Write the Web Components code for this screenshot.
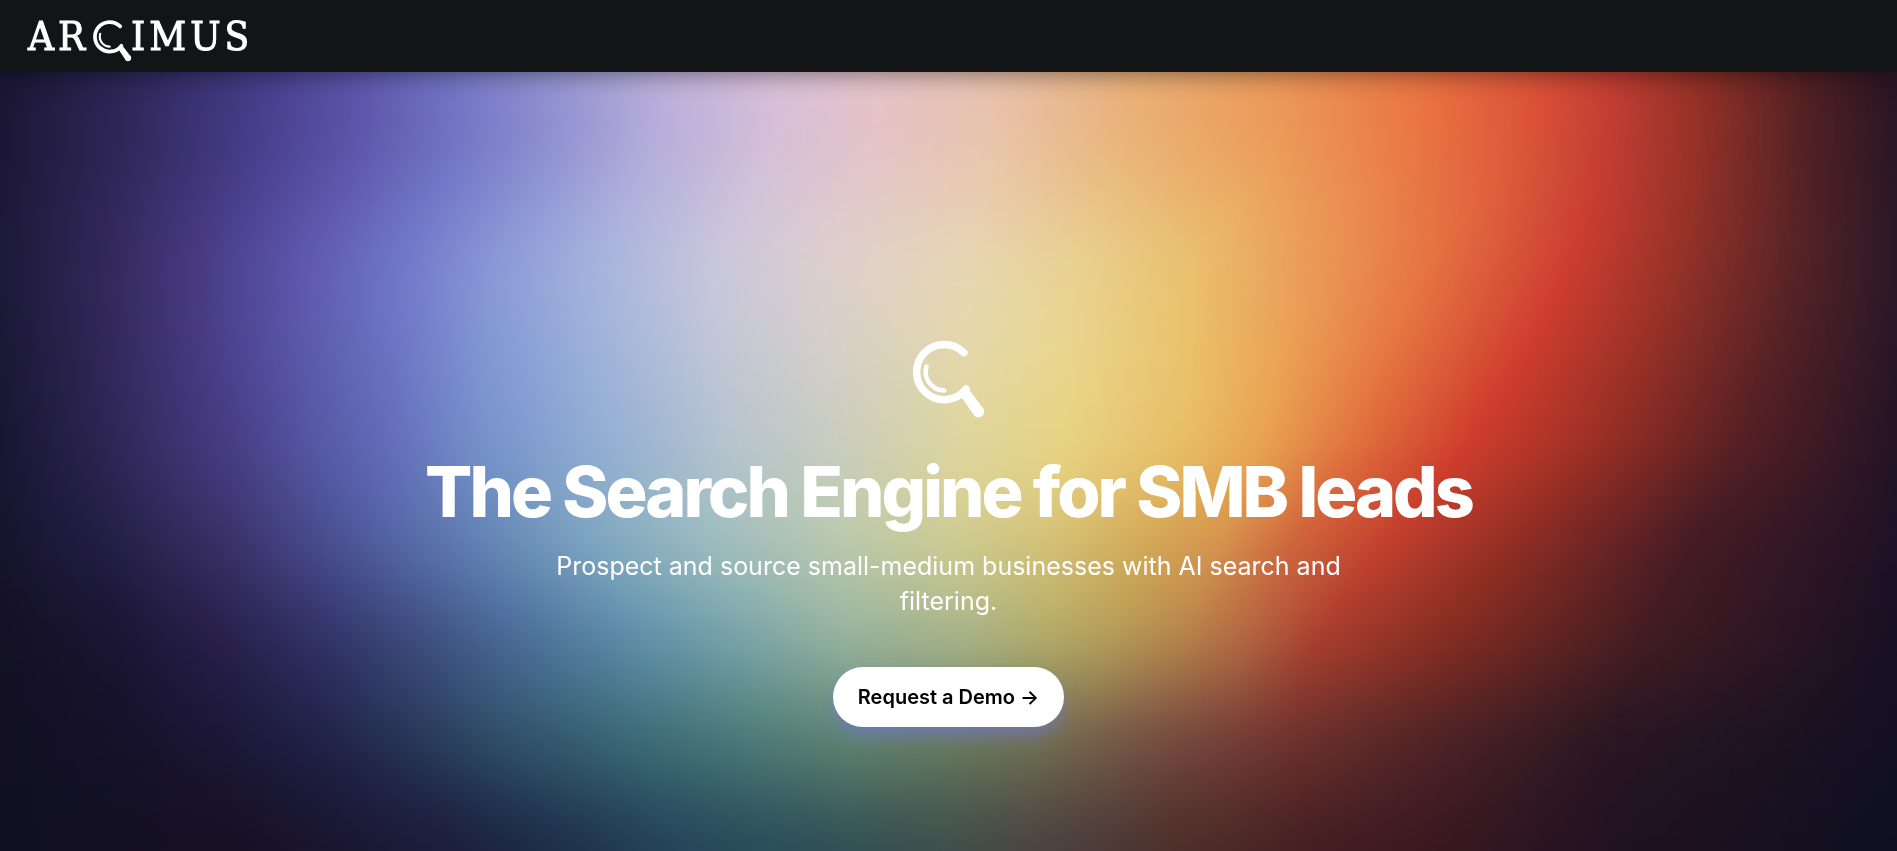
<!DOCTYPE html>
<html lang="en">
<head>
<meta charset="utf-8">
<meta name="viewport" content="width=device-width, initial-scale=1">
<title>Arcimus</title>
<style>
  html, body { height: 100%; }
  body { margin: 0; background: #111022; color: #fff; font-family: Inter, "Liberation Sans", sans-serif; }
</style>
</head>
<body>
<arc-page>
  <arc-header slot="header"></arc-header>
  <arc-hero>
    <span slot="title">The Search Engine for SMB leads</span>
    <span slot="lead">Prospect and source small-medium businesses with AI search and filtering.</span>
    <arc-cta slot="action">Request a Demo →</arc-cta>
  </arc-hero>
</arc-page>

<script>
class ArcElement extends HTMLElement {
  constructor() {
    super();
    this.attachShadow({ mode: 'open' }).innerHTML = this.constructor.markup;
  }
}

/* Magnifying glass mark */
customElements.define('arc-mark', class extends ArcElement {
  static markup = `
    <style>
      :host { display: block; }
      svg { display: block; width: 100%; height: 100%; overflow: visible; }
      .line { fill: none; stroke: currentColor; stroke-linecap: round; }
      .ring { stroke-width: var(--ring, 7.5); }
      .glint { stroke-width: var(--glint, 4.6); }
    </style>
    <svg viewBox="0 0 71 76" aria-hidden="true">
      <path class="line ring" d="M50.8 11.6A27.6 27.6 0 1 0 53 48"/>
      <path class="line glint" d="M13.5 25.5A18.6 18.6 0 0 0 31.3 49.5"/>
      <path fill="currentColor" d="M48 55.5L56.2 49L69.8 66.8A5.7 5.7 0 0 1 61 74.3Z"/>
      <circle fill="currentColor" cx="65.3" cy="70.5" r="5.7"/>
    </svg>`;
});

/* Colour field: each row lists [x, colour] stops on a 1568-unit axis; stop n
   of one row flows into stop n of the next. */
const FIELD = [
  [0, '0 1b1633 100 2e2657 200 453a84 290 5b55ab 370 7375c5 460 9596d3 545 bcb0db 640 d8c0d8 720 e5c3ca 820 e9c1ad 940 eab078 1060 ec9859 1170 ea7544 1265 db5338 1328 c43e34 1400 933127 1500 4c1f23 1568 291524'],
  [62, '0 1c1735 100 2f2759 200 463b86 290 5b55ab 370 7173c4 460 9193d2 545 b8afdb 640 d6c0d8 720 e4c4c9 820 e9c5ac 940 eab375 1060 ec9a58 1170 ea7744 1260 dc5538 1325 c63e33 1400 973228 1500 4e2024 1568 2a1625'],
  [198, '0 1d1937 85 312859 165 483b84 250 5d58ae 330 7077c9 412 8a9ad7 495 a6b4dd 590 c8c7dc 680 dccfcf 800 e7d6b2 885 e9d292 985 eac06d 1085 eb9a56 1175 e77543 1295 cd3d30 1370 a03429 1485 552326 1568 2b1827'],
  [368, '0 191632 80 2b2450 190 483d85 260 5658a4 320 636dba 400 7792cb 490 91add4 600 b6c4cf 690 cacdc0 800 dfd69e 880 e7d384 980 e8bd66 1040 e8a553 1115 e2753f 1215 cf3d2d 1310 a13126 1440 562024 1568 241426'],
  [468, '0 17142d 80 221d42 190 3b3269 260 474a8c 320 5362a3 400 6384b5 490 7ea5c1 590 9dbcc0 690 b9c8ae 790 cdcb92 870 d4c176 950 d4a957 1010 d6944e 1070 cf663d 1150 c23f2d 1260 8f2d24 1400 461c24 1568 1f1226'],
  [568, '0 141125 100 1b1634 190 29214d 270 323468 340 3d4b7c 420 496a95 530 6090a8 620 7ba4a6 700 95b19c 800 a6b084 870 b0a766 920 b29958 980 b3804a 1030 b06541 1090 a83e2f 1200 822c22 1360 411c22 1568 181024'],
  [668, '0 121022 100 16122a 190 1d1838 270 212349 340 283658 420 305069 530 3d6b78 620 4e7a79 700 5f8372 790 6a7c60 860 737053 910 765f4a 970 774c3f 1020 753f37 1070 6f322d 1170 552526 1330 2b1722 1568 131022'],
  [779, '0 111022 100 131022 200 181125 290 1b1733 370 1c1f3c 460 1e304a 560 26465a 630 2a4f5a 700 335155 780 40504c 850 4b4642 910 4d3b38 970 4e302b 1020 4c2927 1080 461f22 1180 3b1920 1330 221222 1568 0e1020']
].map(([y, list]) => {
  const t = list.split(' ');
  const stops = [];
  for (let i = 0; i < t.length; i += 2) {
    const n = parseInt(t[i + 1], 16);
    stops.push([t[i] / 1568, n >> 16, (n >> 8) & 255, n & 255]);
  }
  return { y: y / 779, stops };
});

customElements.define('arc-spectrum', class extends ArcElement {
  static markup = `
    <style>
      :host { display: block; overflow: hidden; }
      canvas { display: block; width: 100%; height: 100%; }
    </style>
    <canvas width="960" height="400"></canvas>`;
  connectedCallback() {
    const canvas = this.shadowRoot.querySelector('canvas');
    const ctx = canvas.getContext('2d');
    const { width, height } = canvas;
    /* Catmull-Rom between rows, so no row shows as a band */
    const mix = (a, b, c, d, t) =>
      b + 0.5 * t * (c - a + t * (2 * a - 5 * b + 4 * c - d + t * (3 * (b - c) + d - a)));
    for (let y = 0; y < height; y++) {
      const v = y / (height - 1);
      let k = 0;
      while (k < FIELD.length - 2 && v > FIELD[k + 1].y) k++;
      const rows = [k - 1, k, k + 1, k + 2].map(i => FIELD[Math.max(0, Math.min(FIELD.length - 1, i))]);
      const t = (v - rows[1].y) / (rows[2].y - rows[1].y);
      const g = ctx.createLinearGradient(0, 0, width, 0);
      rows[1].stops.forEach((_, i) => {
        const [x, r, gr, b] = [0, 1, 2, 3].map(c => mix(...rows.map(row => row.stops[i][c]), t));
        g.addColorStop(Math.max(0, Math.min(1, x)), `rgb(${r} ${gr} ${b})`);
      });
      ctx.fillStyle = g;
      ctx.fillRect(0, y, width, 1);
    }
  }
});

customElements.define('arc-header', class extends ArcElement {
  static markup = `
    <style>
      :host { display: block; background: #131416; box-shadow: 0 2px 24px rgba(0, 0, 0, .45); }
      nav { display: flex; align-items: center; height: 72px; padding: 0 28px; }
      a { display: flex; align-items: center; color: #fff; text-decoration: none;
          font: 40px/48px "DejaVu Serif Condensed", "DejaVu Serif", serif; font-stretch: condensed;
          -webkit-text-stroke: 1px #fff; }
      .word { display: flex; gap: 4px; }
      arc-mark { width: 38px; height: 41px; margin: 8px 0 0 8px; --ring: 7; --glint: 4; }
    </style>
    <nav aria-label="Main">
      <a href="#" aria-label="Arcimus">
        <span class="word"><span>A</span><span>R</span></span>
        <arc-mark></arc-mark>
        <span class="word"><span>I</span><span>M</span><span>U</span><span>S</span></span>
      </a>
    </nav>`;
});

customElements.define('arc-cta', class extends ArcElement {
  static markup = `
    <style>
      :host { display: block; }
      button { display: block; border: 0; margin: 0; padding: 18px 25px; border-radius: 30px; background: #fff; color: #000;
               font: 600 20px/24px Inter, sans-serif; cursor: pointer;
               box-shadow: 0 10px 20px -4px rgba(108, 114, 220, .7); }
    </style>
    <button type="button"><slot></slot></button>`;
});

customElements.define('arc-hero', class extends ArcElement {
  static markup = `
    <style>
      :host { display: grid; }
      arc-spectrum, section { grid-area: 1 / 1; min-width: 0; min-height: 0; }
      arc-spectrum { height: 0; min-height: 100%; }
      section { position: relative; display: flex; flex-direction: column; align-items: center; justify-content: center;
                box-sizing: border-box; padding: 267px 24px 122px; text-align: center; }
      arc-mark { width: 71px; height: 76px; }
      h1 { margin: 33px 0 0; font-size: 70px; line-height: 84px; font-weight: 800; letter-spacing: -3px; }
      p { margin: 15px 0 0; max-width: 800px; font-size: 25px; line-height: 35px; }
      ::slotted(arc-cta) { margin-top: 48px; }
    </style>
    <arc-spectrum></arc-spectrum>
    <section>
      <arc-mark></arc-mark>
      <h1><slot name="title"></slot></h1>
      <p><slot name="lead"></slot></p>
      <slot name="action"></slot>
    </section>`;
});

customElements.define('arc-page', class extends ArcElement {
  static markup = `
    <style>
      :host { display: flex; flex-direction: column; min-height: 100vh; }
      header { position: relative; z-index: 1; }
      main { flex: 1; display: grid; }
    </style>
    <header><slot name="header"></slot></header>
    <main><slot></slot></main>`;
});
</script>
</body>
</html>
